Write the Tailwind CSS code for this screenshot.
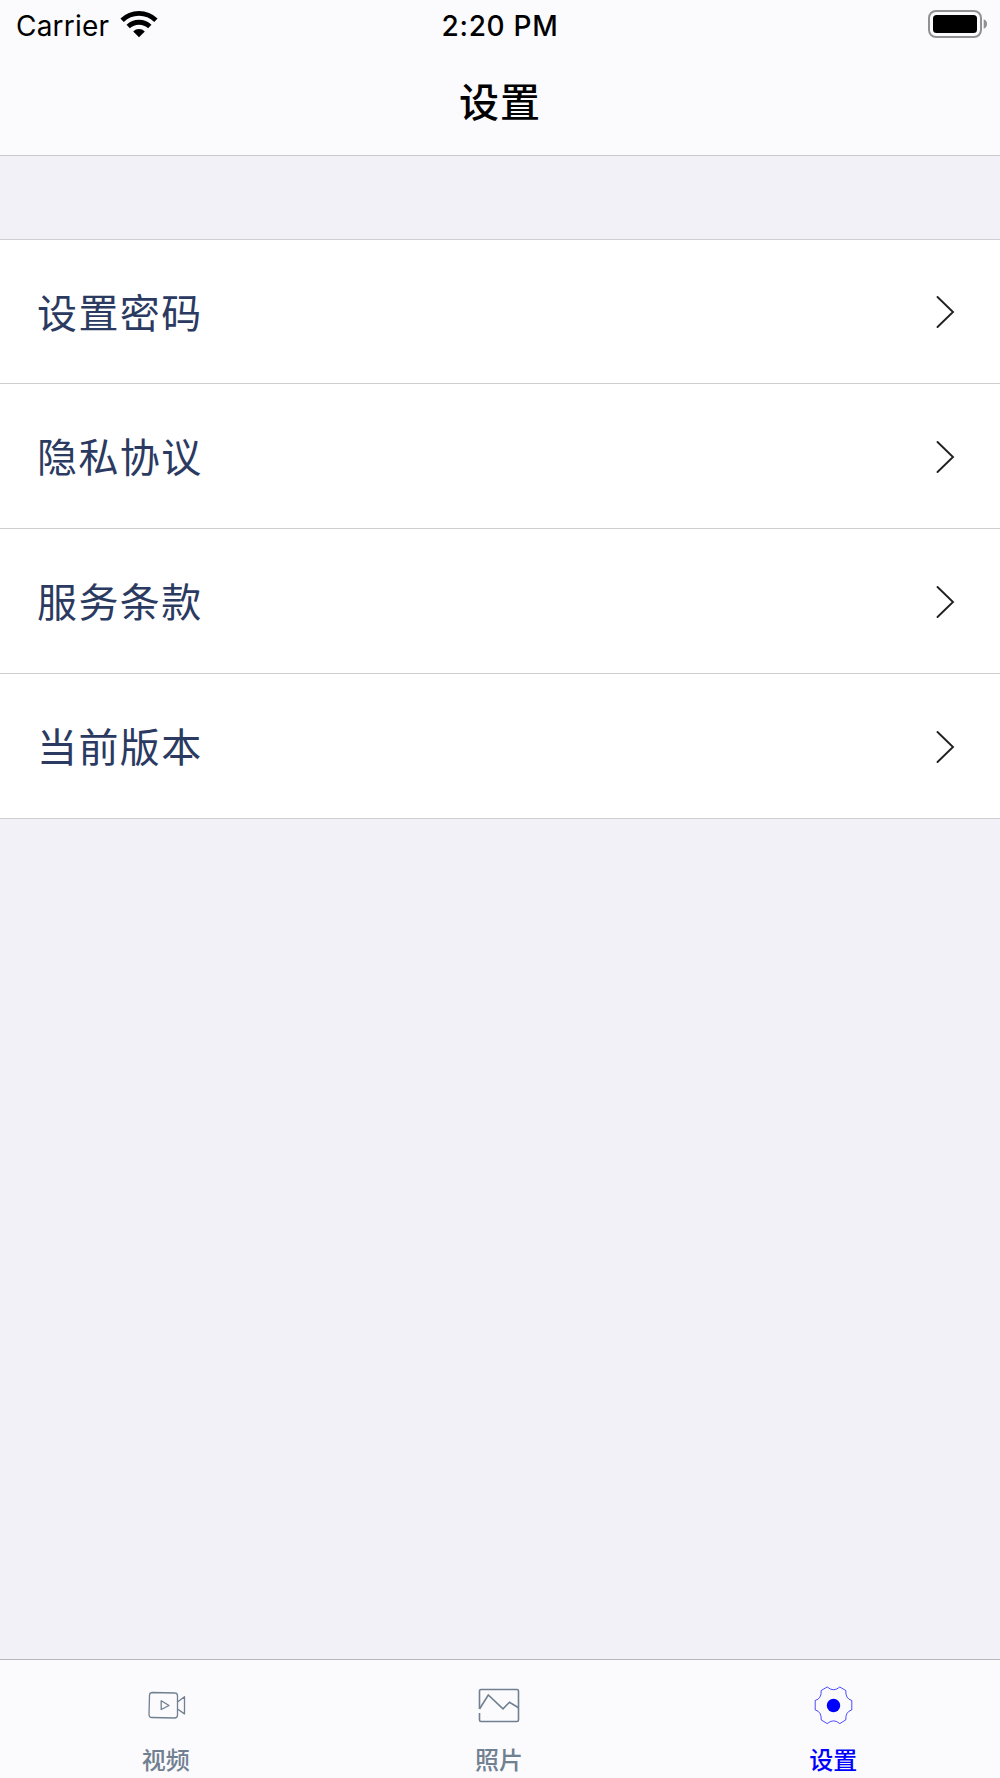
<!DOCTYPE html>
<html lang="zh-CN">
<head>
<meta charset="utf-8">
<title>设置</title>
<script src="https://cdn.jsdelivr.net/npm/@tailwindcss/browser@4"></script>
</head>
<body class="w-[1000px] h-[1778px] overflow-hidden flex flex-col bg-[#f2f1f7] font-['Inter','Noto_Sans_CJK_SC',sans-serif]">
<header class="h-[156px] shrink-0 bg-[#fbfafd] border-b border-[#c9c9cc]">
  <div class="h-[50px] grid grid-cols-3 items-center text-[28px] leading-[48px] text-black">
    <div class="flex items-center pl-4 gap-[11px]">
      <span class="w-[93px] whitespace-nowrap tracking-[0.2px] pt-[2px]">Carrier</span>
      <svg class="w-[38px] h-[28px] -mt-[3px]" viewBox="0 0 38 28" fill="none" stroke="#000" stroke-width="4.8"><path d="M2.1 10.3a24.2 24.2 0 0 1 33.8 0"/><path d="M8.2 16.6a15.6 15.6 0 0 1 21.600 0"/><path d="M13.2 21.400a8.3 8.3 0 0 1 11.600 0L19 27.200z" fill="#000" stroke="none"/></svg>
    </div>
    <span class="text-center font-medium whitespace-nowrap tracking-[0.7px] pt-[2px]">2:20 PM</span>
    <div class="flex justify-end pr-[12px]">
      <svg class="w-[60px] h-[28px] -mt-[2px]" viewBox="0 0 60 28"><rect x="1" y="1" width="52" height="26" rx="7" fill="none" stroke="#919193" stroke-width="2"/><rect x="5" y="5" width="44" height="18" rx="3.5"/><path d="M55.7 9.300a5 5 0 0 1 0 9.400z" fill="#919193"/></svg>
    </div>
  </div>
  <h1 class="h-[105px] text-center text-[40px] leading-[105px] tracking-[1px] font-medium text-black">设置</h1>
</header>
<main class="mt-[83px] shrink-0 bg-white border-t border-[#cfcfd2] text-[40px] tracking-[1.4px] text-[#2b3a61]">
  <div class="h-[144px] flex items-center justify-between pl-[37px] pr-[44px] border-b border-[#cfcfd2]"><span class="pt-[4px]">设置密码</span><svg class="w-5 h-9" viewBox="0 0 20 36" fill="none" stroke="#202020" stroke-width="1.9"><path d="M1.5 3 17 18 1.5 33" stroke-linecap="round"/></svg></div>
  <div class="h-[145px] flex items-center justify-between pl-[37px] pr-[44px] pt-px border-b border-[#cfcfd2]"><span class="pt-[3px]">隐私协议</span><svg class="w-5 h-9" viewBox="0 0 20 36" fill="none" stroke="#202020" stroke-width="1.9"><path d="M1.5 3 17 18 1.5 33" stroke-linecap="round"/></svg></div>
  <div class="h-[145px] flex items-center justify-between pl-[37px] pr-[44px] pt-px border-b border-[#cfcfd2]"><span class="pt-[3px]">服务条款</span><svg class="w-5 h-9" viewBox="0 0 20 36" fill="none" stroke="#202020" stroke-width="1.9"><path d="M1.5 3 17 18 1.5 33" stroke-linecap="round"/></svg></div>
  <div class="h-[145px] flex items-center justify-between pl-[37px] pr-[44px] pt-px border-b border-[#cfcfd2]"><span class="pt-[3px]">当前版本</span><svg class="w-5 h-9" viewBox="0 0 20 36" fill="none" stroke="#202020" stroke-width="1.9"><path d="M1.5 3 17 18 1.5 33" stroke-linecap="round"/></svg></div>
</main>
<nav class="mt-auto h-[119px] shrink-0 grid grid-cols-3 bg-[#fbfafd] border-t border-[#b8b8bb] text-[24px] leading-[36px] font-medium text-[#708090]">
  <div class="flex flex-col items-center pt-[25px] pr-[2px]">
    <svg class="w-10 h-10" viewBox="-1 0 40 40" fill="none" stroke="currentColor" stroke-width="1.3" stroke-linejoin="round"><path d="M5.5 7.5 28 8q2.500 0 2.500 3v19q0 3-3 3L5 32.5q-3 0-3-3L2.500 10.500q0-3 3-3z"/><path d="M14.200 15.800v8.700l7.800-4zM30.500 17l7-5.300v17.200L30.500 24"/></svg>
    <span class="mt-[18px]">视频</span>
  </div>
  <div class="flex flex-col items-center pt-[25px] pr-[2px]">
    <svg class="w-[42px] h-10" viewBox="0 0 42 40" fill="none" stroke="currentColor" stroke-width="1.6"><path d="M1.500 24V6q0-1.500 1.500-1.500h36q1.500 0 1.500 1.500v29q0 1.500-1.500 1.500H3q-1.500 0-1.500-1.500v-7"/><path d="m1.500 24 8.800-14 14.700 13.800 6.500-6.600 9 5.500"/></svg>
    <span class="mt-[18px]">照片</span>
  </div>
  <div class="flex flex-col items-center pt-[25px] text-[#0000ff]">
    <svg class="w-10 h-10" viewBox="0 0 40 40" fill="none" stroke="currentColor" stroke-width="0.7"><path d="M14.200 2q6.300 5.500 12.600 0l6 3.500q-.5 8.200 6 10v9.400q-6.500 1.800-6 10l-6 3.700q-6.300-5.500-12.600 0l-6-3.700q.5-8.200-6-10v-9.400q6.500-1.800 6-10z"/><circle cx="20.500" cy="20.500" r="6.700" fill="currentColor" stroke="none"/></svg>
    <span class="mt-[18px]">设置</span>
  </div>
</nav>
</body>
</html>
